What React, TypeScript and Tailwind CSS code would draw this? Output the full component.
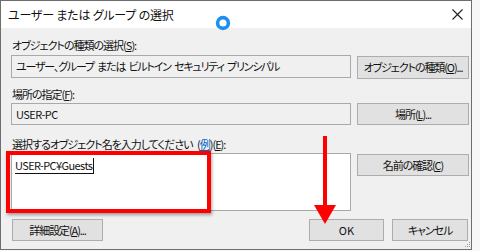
import React from "react";

const jp = { fontFamily: '"Noto Sans CJK JP", "Noto Sans", sans-serif', fontFeatureSettings: '"palt"' } as React.CSSProperties;

function Btn({ children, className = "" }: { children: React.ReactNode; className?: string }) {
  return (
    <div
      className={
        "flex items-center justify-center whitespace-nowrap bg-[#e1e1e1] border border-[#adadad] text-[11px] tracking-[-1.1px] text-[#111] leading-none " +
        className
      }
    >
      {children}
    </div>
  );
}

export default function App() {
  return (
    <div className="relative w-[480px] h-[251px] overflow-hidden bg-[#f7f7f7]" style={jp}>
      <div className="flex flex-col w-[472px] h-[250px] border border-[#6e6e6e] bg-[#f0f0f0]">
        {/* title bar */}
        <div className="flex items-center justify-between h-[27px] bg-white pl-[7px] pr-[8px]">
          <span className="text-[12px] text-[#111] tracking-[-0.2px]">ユーザー または グループ の選択</span>
          <svg width="11" height="11" viewBox="0 0 11 11">
            <path d="M0.5 0.5 L10.5 10.5 M10.5 0.5 L0.5 10.5" stroke="#222" strokeWidth="1.1" />
          </svg>
        </div>
        {/* body */}
        <div className="flex flex-col pl-[10px] pr-[2px] text-[11px] tracking-[-1px] [word-spacing:3px] text-[#111] whitespace-nowrap">
          <div className="mt-[9px] h-[16px] leading-[16px] pl-[1px]">
            オブジェクトの種類の選択(<span className="underline">S</span>):
          </div>
          <div className="flex gap-[6px] mt-[2px]">
            <div className="w-[340px] h-[23px] border border-[#a9a9a9] bg-[#f0f0f0] flex items-center pl-[4px] tracking-[-1.2px] [word-spacing:2px]">
              ユーザー、グループ または ビルトイン セキュリティ プリンシパル
            </div>
            <Btn className="w-[112px] h-[23px] mt-[1px]">
              オブジェクトの種類(<span className="underline">O</span>)...
            </Btn>
          </div>
          <div className="mt-[7px] h-[16px] leading-[16px] pl-[1px]">
            場所の指定(<span className="underline">F</span>):
          </div>
          <div className="flex gap-[6px] mt-[1px]">
            <div className="w-[340px] h-[22px] border border-[#a9a9a9] bg-[#f0f0f0] flex items-center pl-[4px] tracking-[-0.5px]">
              USER-PC
            </div>
            <Btn className="w-[112px] h-[22px]">
              場所(<span className="underline">L</span>)...
            </Btn>
          </div>
          <div className="mt-[11px] h-[16px] leading-[16px] pl-[1px]">
            選択するオブジェクト名を入力してください (<span className="underline text-[#0066cc]">例</span>)(
            <span className="underline">E</span>):
          </div>
          <div className="flex gap-[6px] mt-[1px]">
            <div className="w-[340px] h-[58px] border border-[#a9a9a9] bg-white pl-[3px] pt-[3px]">
              <span className="inline-block border-b border-r border-[#111] leading-[15px] pr-[1px] tracking-[-0.6px]">
                USER-PC¥Guests
              </span>
            </div>
            <Btn className="w-[112px] h-[22px] mt-[1px]">
              名前の確認(<span className="underline">C</span>)
            </Btn>
          </div>
          <div className="flex mt-[8px] pr-[1px]">
            <Btn className="w-[91px] h-[22px] ml-[1px]">
              詳細設定(<span className="underline">A</span>)...
            </Btn>
            <div className="flex-1" />
            <Btn className="w-[75px] h-[22px] tracking-[0px]">OK</Btn>
            <Btn className="w-[76px] h-[22px] ml-[8px]">キャンセル</Btn>
          </div>
        </div>
      </div>

      {/* loading cursor ring */}
      <svg className="absolute left-[215px] top-[15px]" width="16" height="16" viewBox="0 0 16 16">
        <circle cx="8" cy="8" r="5.4" fill="none" stroke="#1e8ff0" strokeWidth="3.6" />
      </svg>

      {/* red highlight rectangle */}
      <div className="absolute left-[6px] top-[151px] w-[205px] h-[62px] border-[4px] border-[#ff0000] shadow-[1px_2px_3px_rgba(0,0,0,0.35)]" />

      {/* red arrow */}
      <svg className="absolute left-[313px] top-[136px]" width="24" height="90" viewBox="0 0 24 90">
        <rect x="10" y="0" width="4" height="72" fill="#ff0000" />
        <path d="M1 69 L23 69 L12 88 Z" fill="#ff0000" />
      </svg>

      {/* size grip */}
      <svg className="absolute left-[464px] top-[241px]" width="7" height="7" viewBox="0 0 7 7">
        <rect x="5" y="1" width="1" height="1" fill="#999" />
        <rect x="3" y="3" width="1" height="1" fill="#999" />
        <rect x="5" y="3" width="1" height="1" fill="#999" />
        <rect x="1" y="5" width="1" height="1" fill="#999" />
        <rect x="3" y="5" width="1" height="1" fill="#999" />
        <rect x="5" y="5" width="1" height="1" fill="#999" />
      </svg>
    </div>
  );
}
